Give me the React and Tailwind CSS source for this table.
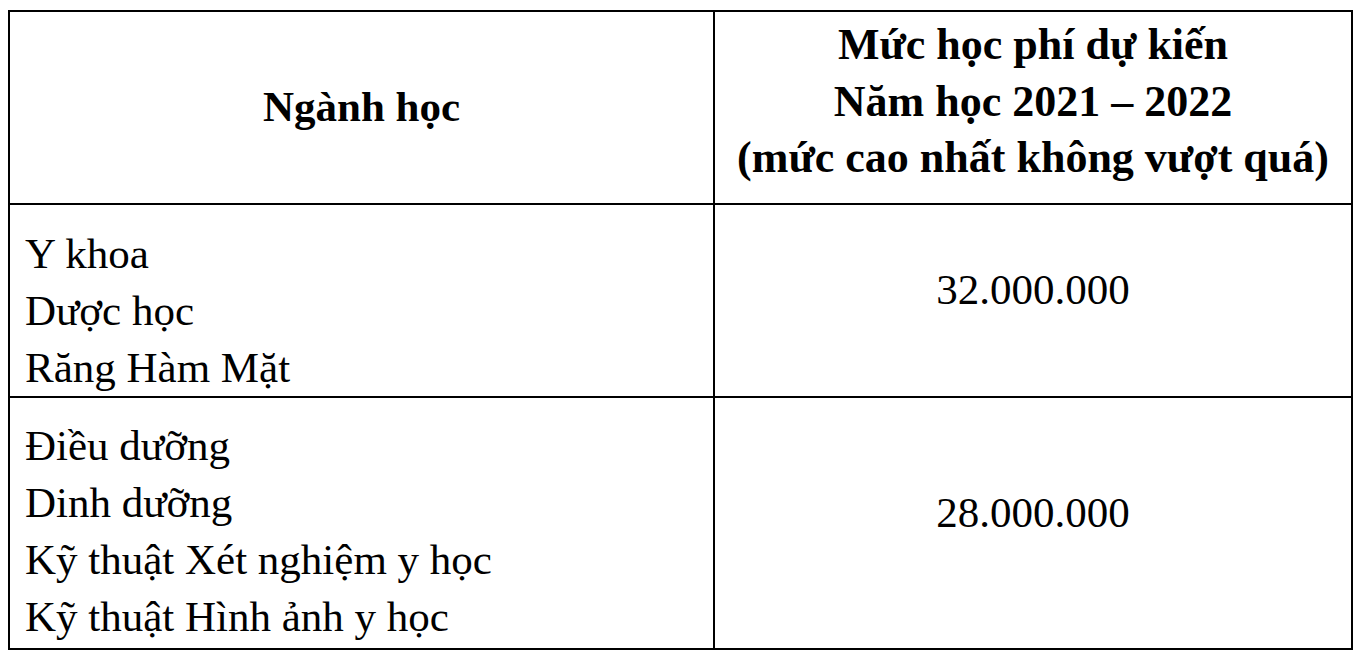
import React from 'react';

const rows = [
  {
    id: 'y',
    majors: ['Y khoa', 'Dược học', 'Răng Hàm Mặt'],
    fee: '32.000.000',
    rowClass: 'h-[193px] border-b-2',
    majorsClass: 'pt-[20px]',
    feeClass: 'pt-[56px]',
  },
  {
    id: 'dd',
    majors: ['Điều dưỡng', 'Dinh dưỡng', 'Kỹ thuật Xét nghiệm y học', 'Kỹ thuật Hình ảnh y học'],
    fee: '28.000.000',
    rowClass: 'h-[250px]',
    majorsClass: 'pt-[19px]',
    feeClass: 'pt-[86px]',
  },
];

const App = () => {
  return (
    <div
      className="w-[1364px] h-[661px] bg-white text-black pt-[10px] pl-[8px]"
      style={{ fontFamily: '"Liberation Serif", "Times New Roman", serif' }}
    >
      <div className="w-[1345px] border-2 border-black text-[43px] leading-[57px]">
        {/* Header */}
        <div className="grid grid-cols-[705px_1fr] h-[193px] border-b-2 border-black font-bold">
          <div className="border-r-2 border-black text-center pt-[66px]">Ngành học</div>
          <div className="text-center pt-[5px] text-[44px] leading-[56.5px]">
            <div>Mức học phí dự kiến</div>
            <div>Năm học 2021 – 2022</div>
            <div>(mức cao nhất không vượt quá)</div>
          </div>
        </div>

        {/* Rows */}
        {rows.map((row) => (
          <div key={row.id} className={`grid grid-cols-[705px_1fr] border-black ${row.rowClass}`}>
            <div className={`border-r-2 border-black pl-[15px] ${row.majorsClass}`}>
              {row.majors.map((m) => (
                <div key={m}>{m}</div>
              ))}
            </div>
            <div className={`text-center ${row.feeClass}`}>{row.fee}</div>
          </div>
        ))}
      </div>
    </div>
  );
};

export default App;
